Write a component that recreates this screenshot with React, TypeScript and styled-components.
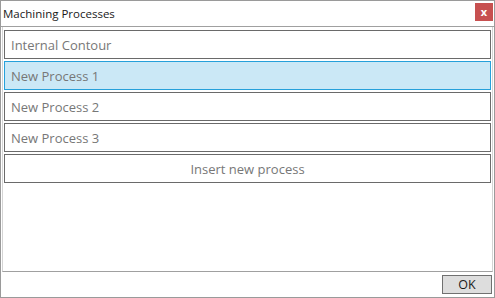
import React from "react";
import styled, { createGlobalStyle } from "styled-components";

const GlobalStyle = createGlobalStyle`
  html, body {
    margin: 0;
    padding: 0;
    background: #ffffff;
  }
  body {
    font-family: "Open Sans", "Noto Sans", sans-serif;
  }
`;

const Window = styled.div`
  width: 495px;
  height: 298px;
  box-sizing: border-box;
  border: 1px solid #9a9a9a;
  display: flex;
  flex-direction: column;
  background: #ffffff;
`;

const TitleBar = styled.div`
  height: 25px;
  display: flex;
  align-items: center;
  justify-content: space-between;
  padding: 0 1px 0 2px;
  border-bottom: 1px solid #a0a0a0;
`;

const Title = styled.div`
  font-size: 11.5px;
  color: #1a1a1a;
`;

const CloseButton = styled.div`
  width: 18px;
  height: 18px;
  background: #c75050;
  color: #ffffff;
  font-size: 11px;
  font-weight: 700;
  display: flex;
  align-items: center;
  justify-content: center;
  margin-top: -4px;
`;

const Panel = styled.div`
  flex: 1;
  margin: 0 1px;
  border: 1px solid #d4d4d4;
  border-top: none;
  border-bottom: 1px solid #a0a0a0;
  padding: 3px 1px;
  display: flex;
  flex-direction: column;
  gap: 2px;
`;

const Item = styled.div<{ $selected?: boolean; $center?: boolean }>`
  height: 29px;
  box-sizing: border-box;
  border: 1px solid ${(p) => (p.$selected ? "#26a0da" : "#6a6a6a")};
  background: ${(p) => (p.$selected ? "#cbe8f6" : "#ffffff")};
  color: #777777;
  font-size: 13px;
  display: flex;
  align-items: center;
  justify-content: ${(p) => (p.$center ? "center" : "flex-start")};
  padding-left: ${(p) => (p.$center ? "0" : "6px")};
`;

const Footer = styled.div`
  height: 25px;
  display: flex;
  align-items: center;
  justify-content: flex-end;
  padding-right: 2px;
`;

const OkButton = styled.div`
  width: 50px;
  height: 19px;
  box-sizing: border-box;
  border: 1px solid #707070;
  background: #dddddd;
  color: #1a1a1a;
  font-size: 12.5px;
  display: flex;
  align-items: center;
  justify-content: center;
`;

const processes = ["Internal Contour", "New Process 1", "New Process 2", "New Process 3"];

export default function App() {
  return (
    <>
      <GlobalStyle />
      <Window>
        <TitleBar>
          <Title>Machining Processes</Title>
          <CloseButton>x</CloseButton>
        </TitleBar>
        <Panel>
          {processes.map((name, i) => (
            <Item key={name} $selected={i === 1}>
              {name}
            </Item>
          ))}
          <Item $center>Insert new process</Item>
        </Panel>
        <Footer>
          <OkButton>OK</OkButton>
        </Footer>
      </Window>
    </>
  );
}
